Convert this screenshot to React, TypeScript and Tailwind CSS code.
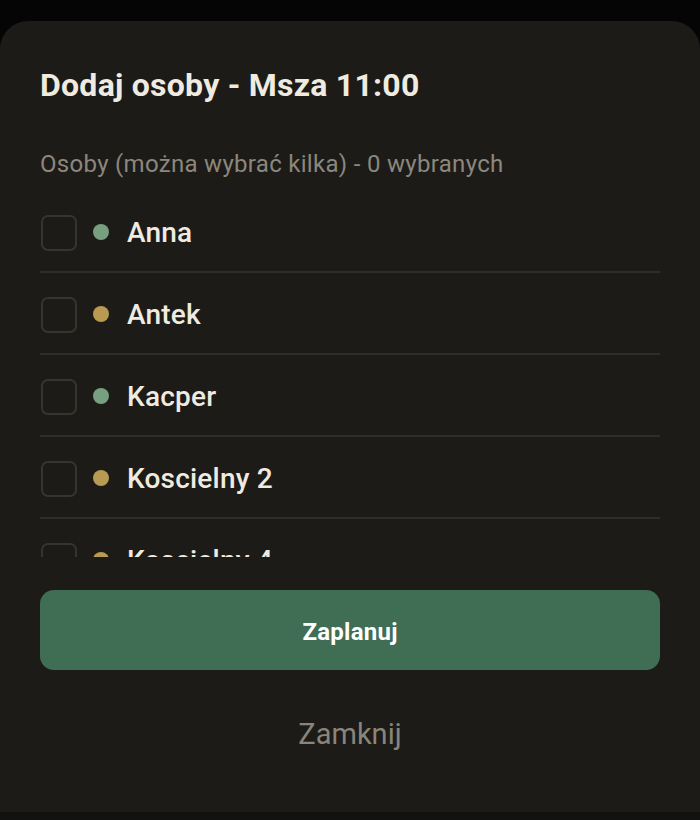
import { useState } from "react";

type Person = { name: string; tone: "green" | "gold" };

const PEOPLE: Person[] = [
  { name: "Anna", tone: "green" },
  { name: "Antek", tone: "gold" },
  { name: "Kacper", tone: "green" },
  { name: "Koscielny 2", tone: "gold" },
  { name: "Koscielny 4", tone: "gold" },
  { name: "Marek", tone: "green" },
];

const DOT: Record<Person["tone"], string> = {
  green: "bg-[#76a080]",
  gold: "bg-[#b99a52]",
};

export default function App() {
  const [picked, setPicked] = useState<string[]>([]);
  const toggle = (n: string) =>
    setPicked(p => (p.includes(n) ? p.filter(x => x !== n) : [...p, n]));

  return (
    <div className="h-[820px] w-full flex flex-col bg-[#050505] pt-[21px] font-['Roboto',sans-serif]">
      <div className="flex-1 flex flex-col rounded-t-[28px] bg-[#1c1b18] px-10 pt-[46px]">
        <h2 className="text-[32px] leading-[36px] font-bold tracking-[0.25px] text-[#f0ebe0]">Dodaj osoby - Msza 11:00</h2>
        <p className="mt-[47px] text-[24px] leading-[28px] tracking-[0.3px] text-[#8c877c]">
          Osoby (można wybrać kilka) - {picked.length} wybranych
        </p>
        <div className="mt-[13px] h-[366px] overflow-hidden">
          {PEOPLE.map(p => (
            <div
              key={p.name}
              onClick={() => toggle(p.name)}
              className="h-[82px] flex items-center border-b-2 border-[#302e2a] cursor-pointer"
            >
              <span
                className={`ml-px mt-[3px] w-9 h-9 rounded-[7px] border-2 border-[#36342f] flex-shrink-0 ${picked.includes(p.name) ? "bg-[#3f6e55]" : ""}`}
              />
              <span className={`ml-[16px] mt-[2px] w-4 h-4 rounded-full flex-shrink-0 ${DOT[p.tone]}`} />
              <span className="ml-[18px] mt-[3px] text-[28px] font-medium tracking-[0.2px] text-[#f0ebe0]">{p.name}</span>
            </div>
          ))}
        </div>
        <button className="mt-[33px] h-20 w-full rounded-[14px] bg-[#3f6e55] pt-1 text-[24px] font-bold tracking-[0.25px] text-white">
          Zaplanuj
        </button>
        <button className="mt-[46px] self-center text-[29px] leading-[36px] text-[#8a857a]">Zamknij</button>
      </div>
      <div className="h-2 bg-[#121211]" />
    </div>
  );
}
